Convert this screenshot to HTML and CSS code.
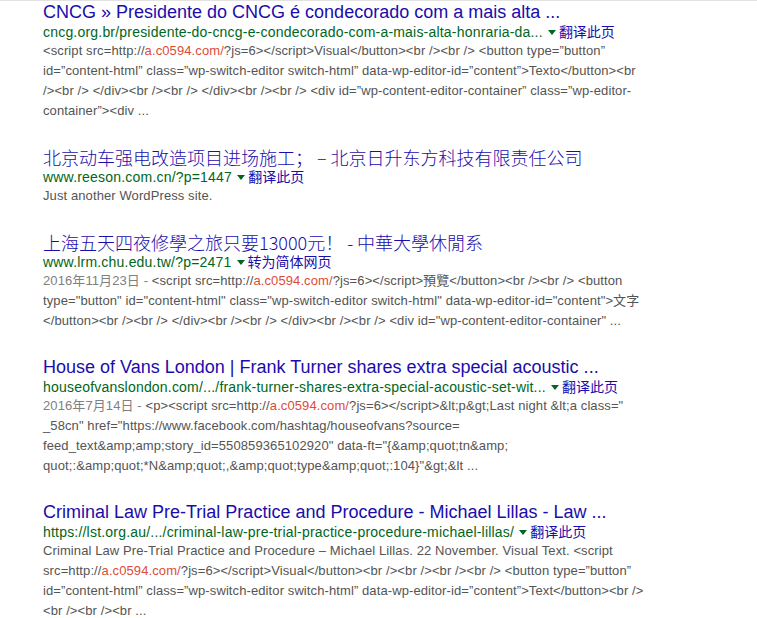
FILE: index.html
```html
<!DOCTYPE html>
<html lang="zh">
<head>
<meta charset="utf-8">
<title>Results</title>
<link rel="stylesheet" href="styles.css">
</head>
<body>
<div class="results">
  <div class="result">
    <div class="title">CNCG » Presidente do CNCG é condecorado com a mais alta ...</div>
    <div class="url">cncg.org.br/presidente-do-cncg-e-condecorado-com-a-mais-alta-honraria-da... <span class="arrow"></span><span class="tr">翻译此页</span></div>
    <div class="snippet">&lt;script src=http://<span class="red">a.c0594.com/</span>?js=6&gt;&lt;/script&gt;Visual&lt;/button&gt;&lt;br /&gt;&lt;br /&gt; &lt;button type=”button”<br>id=”content-html” class=”wp-switch-editor switch-html” data-wp-editor-id=”content”&gt;Texto&lt;/button&gt;&lt;br<br>/&gt;&lt;br /&gt; &lt;/div&gt;&lt;br /&gt;&lt;br /&gt; &lt;/div&gt;&lt;br /&gt;&lt;br /&gt; &lt;div id=”wp-content-editor-container” class=”wp-editor-<br>container”&gt;&lt;div ...</div>
  </div>
  <div class="result">
    <div class="title cjk">北京动车强电改造项目进场施工； – 北京日升东方科技有限责任公司</div>
    <div class="url">www.reeson.com.cn/?p=1447 <span class="arrow"></span><span class="tr">翻译此页</span></div>
    <div class="snippet">Just another WordPress site.</div>
  </div>
  <div class="result">
    <div class="title cjk">上海五天四夜修學之旅只要13000元！ - 中華大學休閒系</div>
    <div class="url">www.lrm.chu.edu.tw/?p=2471 <span class="arrow"></span><span class="tr">转为简体网页</span></div>
    <div class="snippet"><span class="date">2016年11月23日 - </span>&lt;script src=http://<span class="red">a.c0594.com/</span>?js=6&gt;&lt;/script&gt;預覽&lt;/button&gt;&lt;br /&gt;&lt;br /&gt; &lt;button<br>type="button" id="content-html" class="wp-switch-editor switch-html" data-wp-editor-id="content"&gt;文字<br>&lt;/button&gt;&lt;br /&gt;&lt;br /&gt; &lt;/div&gt;&lt;br /&gt;&lt;br /&gt; &lt;/div&gt;&lt;br /&gt;&lt;br /&gt; &lt;div id="wp-content-editor-container" ...</div>
  </div>
  <div class="result">
    <div class="title">House of Vans London | Frank Turner shares extra special acoustic ...</div>
    <div class="url">houseofvanslondon.com/.../frank-turner-shares-extra-special-acoustic-set-wit... <span class="arrow"></span><span class="tr">翻译此页</span></div>
    <div class="snippet"><span class="date">2016年7月14日 - </span>&lt;p&gt;&lt;script src=http://<span class="red">a.c0594.com/</span>?js=6&gt;&lt;/script&gt;&amp;lt;p&amp;gt;Last night &amp;lt;a class="<br>_58cn" href="https://www.facebook.com/hashtag/houseofvans?source=<br>feed_text&amp;amp;amp;story_id=550859365102920" data-ft="{&amp;amp;quot;tn&amp;amp;<br>quot;:&amp;amp;quot;*N&amp;amp;quot;,&amp;amp;quot;type&amp;amp;quot;:104}"&amp;gt;&amp;lt ...</div>
  </div>
  <div class="result">
    <div class="title">Criminal Law Pre-Trial Practice and Procedure - Michael Lillas - Law ...</div>
    <div class="url">https://lst.org.au/.../criminal-law-pre-trial-practice-procedure-michael-lillas/ <span class="arrow"></span><span class="tr">翻译此页</span></div>
    <div class="snippet">Criminal Law Pre-Trial Practice and Procedure – Michael Lillas. 22 November. Visual Text. &lt;script<br>src=http://<span class="red">a.c0594.com/</span>?js=6&gt;&lt;/script&gt;Visual&lt;/button&gt;&lt;br /&gt;&lt;br /&gt;&lt;br /&gt;&lt;br /&gt; &lt;button type=”button”<br>id=”content-html” class=”wp-switch-editor switch-html” data-wp-editor-id=”content”&gt;Text&lt;/button&gt;&lt;br /&gt;<br>&lt;br /&gt;&lt;br /&gt;&lt;br ...</div>
  </div>
</div>
</body>
</html>
```

FILE: styles.css
```css
html, body {
  margin: 0;
  padding: 0;
  background: #fff;
}
body {
  border-top: 1px solid #e2e2e2;
  font-family: "Liberation Sans", Arial, "Noto Sans CJK SC", sans-serif;
  width: 757px;
  height: 617px;
  overflow: hidden;
}
.results {
  padding-left: 43px;
  display: flex;
  flex-direction: column;
  gap: 25px;
}
.result {
  display: flex;
  flex-direction: column;
}
.title {
  font-size: 18px;
  line-height: 22px;
  color: #1a0dab;
  white-space: nowrap;
}
.title.cjk {
  font-family: "Noto Sans CJK SC", sans-serif;
  font-weight: 300;
  font-size: 18px;
}
.url {
  font-size: 14px;
  line-height: 17px;
  color: #006621;
  white-space: nowrap;
  letter-spacing: 0.2px;
}
.arrow {
  display: inline-block;
  width: 0;
  height: 0;
  border-left: 4px solid transparent;
  border-right: 4px solid transparent;
  border-top: 5px solid #006621;
  margin: 0 3px 2px 1px;
  vertical-align: middle;
}
.tr {
  color: #1a0dab;
  font-family: "Noto Sans CJK SC", sans-serif;
  font-size: 14px;
  letter-spacing: 0;
}
.snippet {
  font-size: 13px;
  line-height: 20px;
  color: #545454;
  white-space: nowrap;
  letter-spacing: 0.1px;
}
.red {
  color: #dd4b39;
}
.date {
  color: #808080;
}
```
